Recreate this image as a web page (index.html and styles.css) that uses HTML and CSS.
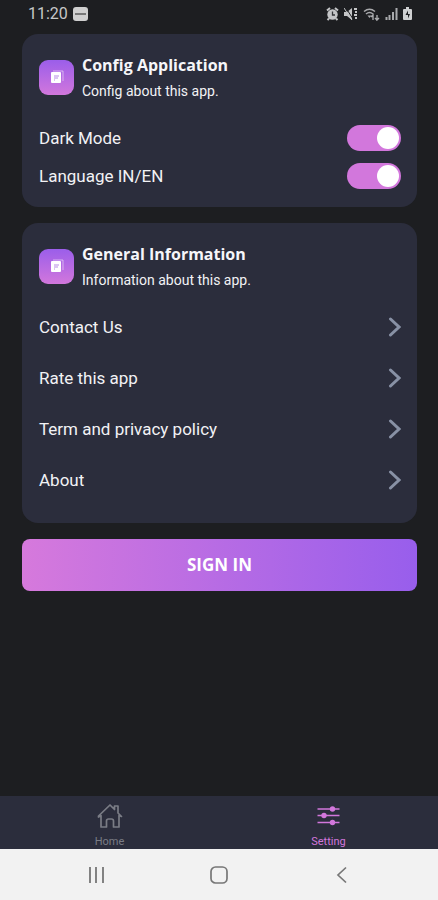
FILE: index.html
```html
<!DOCTYPE html>
<html lang="en">
<head>
<meta charset="utf-8">
<meta name="viewport" content="width=device-width, initial-scale=1">
<title>Setting</title>
<link rel="stylesheet" href="styles.css">
</head>
<body>
<svg class="defs" width="0" height="0" aria-hidden="true">
  <symbol id="icon-doc" viewBox="0 0 14 14">
    <path d="M3 1h10v10" fill="none" stroke="#fff" stroke-opacity=".5" stroke-width="1"/>
    <rect x="1" y="2" width="10" height="11" rx="1" fill="#fff"/>
    <path d="M4 6h5M4 8h4M4 10h1" stroke="#b78be6" stroke-width="1"/>
  </symbol>
  <symbol id="icon-chevron" viewBox="0 0 14 20">
    <path d="M3.500 2L12 10L3.500 18" fill="none" stroke="currentColor" stroke-width="3" stroke-linecap="round" stroke-linejoin="miter"/>
  </symbol>
</svg>

<header class="status">
  <div class="status-group">
    <span class="clock">11:20</span>
    <svg width="15" height="14" viewBox="0 0 15 14" aria-hidden="true">
      <rect width="15" height="14" rx="3" fill="#cfcfcf"/>
      <path d="M2 7h11" stroke="#777" stroke-width="2"/>
    </svg>
  </div>
  <div class="status-icons">
    <svg width="13" height="14" viewBox="0 0 13 14" aria-hidden="true">
      <path d="M1 3.500L4 1M12 3.500L9 1M3 11.500L1.500 13M10 11.500l1.500 1.500" stroke="#c4c5c7" stroke-width="2"/>
      <circle cx="6.500" cy="7.500" r="5.200" fill="#c4c5c7"/>
      <path d="M6.500 4.500v3.500h2.500" fill="none" stroke="#333539" stroke-width="1.300"/>
    </svg>
    <svg width="14" height="14" viewBox="0 0 14 14" aria-hidden="true">
      <path d="M0 5h3l5-4v12L3 9H0z" fill="#c4c5c7"/>
      <path d="M2 1l7 11" stroke="#1d1e21"/>
      <path d="M0 1l8 12" stroke="#c4c5c7"/>
      <path d="M10 2h3M11 5h2M10 8h3M11 11h2" stroke="#c4c5c7" stroke-width="2"/>
    </svg>
    <svg width="17" height="14" viewBox="0 0 17 14" aria-hidden="true">
      <path d="M1 4.500q5.500-4.500 11 0M3 7q3.500-3 7 0" fill="none" stroke="#a9aaad" stroke-width="1.500"/>
      <path d="M4.500 8.500h4l-2 2.500z" fill="#a9aaad"/>
      <path d="M10 13V8l-2 2M14 8v5l2-2M14 13l-2-2" fill="none" stroke="#a9aaad" stroke-width="1.400"/>
    </svg>
    <svg width="13" height="14" viewBox="0 0 13 14" aria-hidden="true">
      <path d="M1.500 10v3M4.500 8v5M8 5v8M11.500 1v12" stroke="#a9aaad" stroke-width="2"/>
    </svg>
    <svg width="9" height="14" viewBox="0 0 9 14" aria-hidden="true">
      <path d="M3 0h3v2h2q1 0 1 1v9q0 1-1 1H1q-1 0-1-1V3q0-1 1-1h2z" fill="#cfd0d2"/>
      <path d="M5 3.500L2.500 8H5v3.500L7 7H5z" fill="#1d1e21"/>
    </svg>
  </div>
</header>

<main class="content">
  <section class="card">
    <div class="card-head">
      <span class="badge"><svg width="14" height="14" aria-hidden="true"><use href="#icon-doc"/></svg></span>
      <div>
        <h2>Config Application</h2>
        <p>Config about this app.</p>
      </div>
    </div>
    <div class="switches">
      <div class="switch-row">
        <label for="dark">Dark Mode</label>
        <input class="switch" type="checkbox" role="switch" id="dark" checked>
      </div>
      <div class="switch-row">
        <label for="lang">Language IN/EN</label>
        <input class="switch" type="checkbox" role="switch" id="lang" checked>
      </div>
    </div>
  </section>

  <section class="card">
    <div class="card-head">
      <span class="badge"><svg width="14" height="14" aria-hidden="true"><use href="#icon-doc"/></svg></span>
      <div>
        <h2>General Information</h2>
        <p>Information about this app.</p>
      </div>
    </div>
    <nav class="links" aria-label="General Information">
      <a href="#contact">Contact Us<svg width="14" height="20" aria-hidden="true"><use href="#icon-chevron"/></svg></a>
      <a href="#rate">Rate this app<svg width="14" height="20" aria-hidden="true"><use href="#icon-chevron"/></svg></a>
      <a href="#policy">Term and privacy policy<svg width="14" height="20" aria-hidden="true"><use href="#icon-chevron"/></svg></a>
      <a href="#about">About<svg width="14" height="20" aria-hidden="true"><use href="#icon-chevron"/></svg></a>
    </nav>
  </section>

  <button class="sign-in" type="button">SIGN IN</button>
</main>

<nav class="tabs" aria-label="Main">
  <a class="tab" href="#home">
    <svg width="26" height="26" viewBox="0 0 26 26" aria-hidden="true">
      <path d="M4 12.500L1.500 14L1.500 13L13 2l4.500 4.500V3H21v7l3.500 3.500L22 12.500V24h-5.500v-6q0-2-2-2h-3q-2 0-2 2v6H4z" fill="none" stroke="currentColor" stroke-width="1.700" stroke-linejoin="round" stroke-linecap="round"/>
    </svg>
    <span>Home</span>
  </a>
  <a class="tab active" href="#setting" aria-current="page">
    <svg width="26" height="26" viewBox="0 0 26 26" aria-hidden="true">
      <path d="M1.500 6h22M1.500 12.500h22M1.500 19.500h22" stroke="currentColor" stroke-width="1.700"/>
      <g fill="currentColor"><circle cx="16.500" cy="6" r="2.700"/><circle cx="8" cy="12.500" r="2.700"/><circle cx="16.500" cy="19.500" r="2.700"/></g>
    </svg>
    <span>Setting</span>
  </a>
</nav>

<footer class="system">
  <button type="button" aria-label="Recent apps">
    <svg width="18" height="18" viewBox="0 0 18 18"><path d="M3 1v16M9 1v16M16 1v16" stroke="currentColor" stroke-width="1.800"/></svg>
  </button>
  <button type="button" aria-label="Home screen">
    <svg width="18" height="18" viewBox="0 0 18 18"><rect x="1" y="1" width="16" height="16" rx="4.500" fill="none" stroke="currentColor" stroke-width="1.700"/></svg>
  </button>
  <button type="button" aria-label="Back">
    <svg width="18" height="18" viewBox="0 0 18 18"><path d="M13 1.500L5 9l8 7.500" fill="none" stroke="currentColor" stroke-width="1.700"/></svg>
  </button>
</footer>
</body>
</html>
```
FILE: styles.css
```css
* {
  box-sizing: border-box;
}

body {
  margin: 0;
  min-height: 100vh;
  display: flex;
  flex-direction: column;
  background: #1d1e21;
  color: #f2f2f5;
  font-family: Roboto, "Liberation Sans", sans-serif;
  font-size: 17px;
}

.defs {
  position: absolute;
}

svg {
  display: block;
  flex: none;
}

a {
  color: inherit;
  text-decoration: none;
}

.status {
  display: flex;
  justify-content: space-between;
  align-items: center;
  padding: 4px 26px 10px 28px;
  font-size: 16px;
  line-height: 20px;
  color: #c6c7c9;
}

.status-group,
.status-icons {
  display: flex;
  align-items: center;
  gap: 5px;
}

.content {
  flex: 1;
  display: flex;
  flex-direction: column;
  gap: 16px;
  padding: 0 21px 16px 22px;
}

.card {
  padding: 17px 16px 12px 17px;
  background: #2b2d3c;
  border-radius: 16px;
}

.card-head {
  display: flex;
  align-items: center;
  gap: 8px;
}

.badge {
  display: grid;
  place-items: center;
  width: 35px;
  height: 35px;
  border-radius: 9px;
  background: linear-gradient(#9b5eea, #d277dc);
}

h2 {
  margin: 0;
  font: 700 16px/28px "Open Sans", sans-serif;
  color: #f6f6f9;
}

p {
  margin: 0;
  font-size: 14px;
  line-height: 24px;
}

.switches {
  padding-top: 16px;
}

.switch-row {
  display: flex;
  align-items: center;
  justify-content: space-between;
  height: 38px;
}

.switch {
  appearance: none;
  display: flex;
  justify-content: flex-end;
  width: 54px;
  height: 26px;
  margin: 0;
  padding: 2px;
  border-radius: 13px;
  background: #d277dc;
}

.switch::before {
  content: "";
  width: 22px;
  height: 22px;
  border-radius: 50%;
  background: #fff;
}

.switch:not(:checked) {
  justify-content: flex-start;
  background: #6d7080;
}

.links {
  padding: 9px 0 6px;
}

.links a {
  display: flex;
  align-items: center;
  justify-content: space-between;
  height: 51px;
}

.links svg {
  color: #8891a5;
}

.sign-in {
  height: 52px;
  border: 0;
  border-radius: 8px;
  background: linear-gradient(90deg, #d679dc, #985eec);
  color: #fff;
  font: 700 17px/24px "Open Sans", sans-serif;
}

.tabs {
  display: grid;
  grid-template-columns: 1fr 1fr;
  background: #2b2d3c;
  color: #7a7c85;
}

.tab {
  display: flex;
  flex-direction: column;
  align-items: center;
  gap: 6px;
  padding-top: 7px;
  font-size: 11px;
  line-height: 14px;
}

.active {
  color: #d277dc;
}

.system {
  display: flex;
  justify-content: center;
  gap: 87px;
  padding: 9px 0 8px;
  background: #f2f2f2;
}

.system button {
  display: grid;
  place-items: center;
  width: 36px;
  height: 34px;
  padding: 0;
  border: 0;
  background: none;
  color: #777;
}
```
